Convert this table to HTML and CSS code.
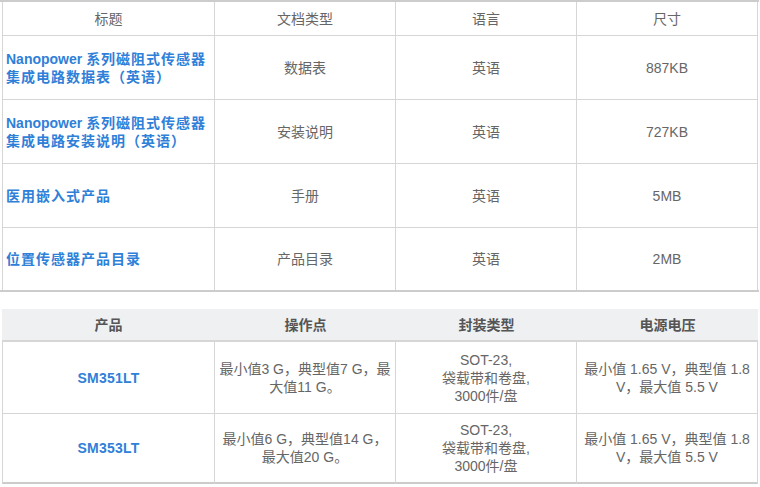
FILE: index.html
```html
<!DOCTYPE html>
<html lang="zh-CN">
<head>
<meta charset="utf-8">
<title>文档与产品</title>
<link rel="stylesheet" href="styles.css">
</head>
<body>
<div class="docs-wrap">
  <table class="grid docs">
    <colgroup>
      <col class="c1"><col class="cn"><col class="cn"><col class="cn">
    </colgroup>
    <thead>
      <tr class="head-row"><th>标题</th><th>文档类型</th><th>语言</th><th>尺寸</th></tr>
    </thead>
    <tbody>
      <tr class="doc-row">
        <td class="title"><a href="#"><span class="latin">Nanopower </span>系列磁阻式传感器集成电路数据表（英语）</a></td>
        <td>数据表</td><td>英语</td><td>887KB</td>
      </tr>
      <tr class="doc-row">
        <td class="title"><a href="#"><span class="latin">Nanopower </span>系列磁阻式传感器集成电路安装说明（英语）</a></td>
        <td>安装说明</td><td>英语</td><td>727KB</td>
      </tr>
      <tr class="doc-row">
        <td class="title"><a href="#">医用嵌入式产品</a></td>
        <td>手册</td><td>英语</td><td>5MB</td>
      </tr>
      <tr class="doc-row last">
        <td class="title"><a href="#">位置传感器产品目录</a></td>
        <td>产品目录</td><td>英语</td><td>2MB</td>
      </tr>
    </tbody>
  </table>
</div>

<div class="prod-wrap">
  <table class="grid prods">
    <colgroup>
      <col class="c1"><col class="cn"><col class="cn"><col class="cn">
    </colgroup>
    <thead>
      <tr class="prod-head"><th>产品</th><th>操作点</th><th>封装类型</th><th>电源电压</th></tr>
    </thead>
    <tbody>
      <tr class="prod-row">
        <td><a class="part" href="#">SM351LT</a></td>
        <td>最小值3 G，典型值7 G，最大值11 G。</td>
        <td>SOT-23,<br>袋载带和卷盘,<br>3000件/盘</td>
        <td>最小值 1.65 V，典型值 1.8 V，最大值 5.5 V</td>
      </tr>
      <tr class="prod-row last">
        <td><a class="part" href="#">SM353LT</a></td>
        <td>最小值6 G，典型值14 G，最大值20 G。</td>
        <td>SOT-23,<br>袋载带和卷盘,<br>3000件/盘</td>
        <td>最小值 1.65 V，典型值 1.8 V，最大值 5.5 V</td>
      </tr>
    </tbody>
  </table>
</div>
</body>
</html>
```

FILE: styles.css
```css
html, body {
  margin: 0;
  padding: 0;
  background: #ffffff;
}

body {
  font-family: "Liberation Sans", "Noto Sans CJK SC", Arial, sans-serif;
  font-size: 14px;
  color: #666666;
  line-height: 18px;
}

a {
  color: #2f80d8;
  text-decoration: none;
  font-weight: bold;
}

.grid {
  border-collapse: separate;
  border-spacing: 0;
  table-layout: fixed;
  width: 756px;
  margin-left: 2px;
}

.grid col.c1 { width: 213px; }
.grid col.cn { width: 181px; }

.grid th,
.grid td {
  box-sizing: border-box;
  padding: 0 3px;
  text-align: center;
  vertical-align: middle;
  border-right: 1px solid #d6d6d6;
  border-bottom: 1px solid #d6d6d6;
}

.grid th:first-child,
.grid td:first-child {
  border-left: 1px solid #d6d6d6;
}

/* documents table */
.docs-wrap {
  width: 759px;
  border-top: 2px solid #cccccc;
  border-bottom: 2px solid #cccccc;
}

.docs th {
  font-weight: normal;
  color: #666666;
  height: 34px;
}

.doc-row td {
  height: 64px;
}

.doc-row.last td {
  height: 62px;
  border-bottom: none;
}

.docs td.title {
  text-align: left;
}

.docs td.title a {
  letter-spacing: 1px;
}

.docs td.title .latin {
  letter-spacing: 0;
}

/* products table */
.prod-wrap {
  margin-top: 17px;
  width: 758px;
}

.prods th {
  background: #eff0f2;
  color: #555555;
  font-weight: bold;
  height: 33px;
  border-right: none;
  border-left: none;
  border-bottom: 2px solid #d6d6d6;
}

.prods th:first-child {
  border-left: none;
}

.prod-row td {
  height: 72px;
}

.prod-row.last td {
  height: 70px;
  border-bottom: 2px solid #cccccc;
}

.part {
  letter-spacing: 0.2px;
}
```
